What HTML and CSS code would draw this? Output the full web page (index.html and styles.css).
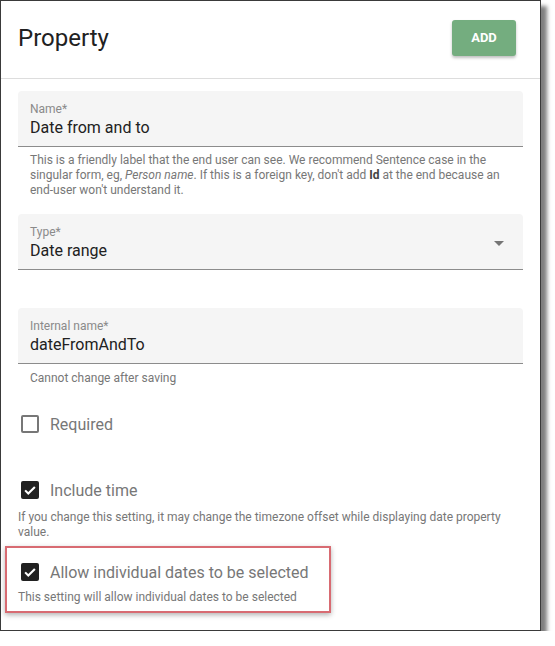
FILE: index.html
```html
<!DOCTYPE html>
<html>
<head>
    <link rel="stylesheet" href="styles.css">
</head>
<body>
    <div class="dialog">
        <div class="dialog-header">
            <h1>Property</h1>
            <button type="button" class="btn-add">ADD</button>
        </div>
        <div class="dialog-content">
            <div class="field-group name-group">
                <div class="field">
                    <label>Name*</label>
                    <div class="value">Date from and to</div>
                </div>
                <p class="helper indent">This is a friendly label that the end user can see. We recommend Sentence case in the singular form, eg, <em>Person name</em>. If this is a foreign key, don't add <b>Id</b> at the end because an end-user won't understand it.</p>
            </div>

            <div class="field-group type-group">
                <div class="field select">
                    <label>Type*</label>
                    <div class="value">Date range</div>
                    <span class="arrow"></span>
                </div>
            </div>

            <div class="field-group">
                <div class="field">
                    <label>Internal name*</label>
                    <div class="value">dateFromAndTo</div>
                </div>
                <p class="helper indent internal-helper">Cannot change after saving</p>
            </div>

            <div class="check-row required-row">
                <span class="checkbox"></span>
                <span class="check-label">Required</span>
            </div>

            <div class="check-row time-row">
                <span class="checkbox checked">
                    <svg viewBox="0 0 24 24" width="18" height="18"><path d="M5.5 12.5l4.2 4.2 8.8-8.8" fill="none" stroke="#fff" stroke-width="2.8"/></svg>
                </span>
                <span class="check-label">Include time</span>
            </div>
            <p class="helper time-helper">If you change this setting, it may change the timezone offset while displaying date property value.</p>

            <div class="highlight">
                <div class="check-row">
                    <span class="checkbox checked">
                        <svg viewBox="0 0 24 24" width="18" height="18"><path d="M5.5 12.5l4.2 4.2 8.8-8.8" fill="none" stroke="#fff" stroke-width="2.8"/></svg>
                    </span>
                    <span class="check-label">Allow individual dates to be selected</span>
                </div>
                <p class="helper highlight-helper">This setting will allow individual dates to be selected</p>
            </div>
        </div>
    </div>
</body>
</html>
```

FILE: styles.css
```css
body {
    margin: 0;
    padding: 0;
    background-color: #fff;
    font-family: Roboto, "Liberation Sans", sans-serif;
}
.dialog {
    width: 539px;
    height: 629px;
    border: 1px solid #3a3a3a;
    background-color: #fff;
    box-shadow: 6px 6px 4px rgba(0,0,0,0.5);
}
.dialog-header {
    height: 73px;
    border-bottom: 1px solid #ddd;
    display: flex;
    align-items: center;
    justify-content: space-between;
    padding: 0 24px 4px 17px;
}
h1 {
    margin: 0;
    font-size: 24px;
    font-weight: 400;
    color: #212121;
}
.btn-add {
    width: 64px;
    height: 36px;
    border: none;
    border-radius: 3px;
    background-color: #74ad7f;
    color: #fff;
    font-family: Roboto, sans-serif;
    font-size: 13px;
    font-weight: 700;
    box-shadow: 0px 2px 3px rgba(0,0,0,0.25);
}
.dialog-content {
    padding: 12px 17px 0 17px;
}
.field {
    position: relative;
    height: 55px;
    box-sizing: content-box;
    padding: 0 12px;
    background-color: #f5f5f5;
    border-bottom: 1px solid #8c8c8c;
    border-radius: 4px 4px 0 0;
}
.field label {
    display: block;
    padding-top: 10px;
    font-size: 12px;
    line-height: 16px;
    color: #8a8a8a;
}
.field .value {
    font-size: 16px;
    line-height: 22px;
    color: #212121;
}
.arrow {
    position: absolute;
    right: 19px;
    top: 27px;
    width: 0;
    height: 0;
    border-left: 5px solid transparent;
    border-right: 5px solid transparent;
    border-top: 5px solid #757575;
}
.helper {
    margin: 6px 0 0 0;
    font-size: 12px;
    line-height: 15px;
    color: #777;
}
.helper.indent {
    padding-left: 12px;
}
.helper b {
    color: #444;
}
.name-group {
    margin-bottom: 16px;
}
.type-group {
    margin-bottom: 38px;
}
.internal-helper {
    margin-top: 7px;
}
.check-row {
    display: flex;
    align-items: center;
    height: 24px;
    padding-left: 3px;
}
.required-row {
    margin-top: 26px;
}
.time-row {
    margin-top: 42px;
}
.checkbox {
    width: 14px;
    height: 14px;
    border: 2px solid #777;
    border-radius: 2px;
    display: flex;
    align-items: center;
    justify-content: center;
}
.checkbox.checked {
    width: 18px;
    height: 18px;
    border: none;
    background-color: #212121;
}
.check-label {
    margin-left: 11px;
    font-size: 16px;
    color: #777;
}
.time-helper {
    margin-top: 8px;
}
.highlight {
    width: 311px;
    margin: 6px 0 0 -13px;
    padding: 12px 0 6px 11px;
    border: 2px solid #d86b72;
    box-shadow: 0px 2px 5px rgba(0,0,0,0.3);
}
.highlight-helper {
    margin-top: 6px;
}
```
